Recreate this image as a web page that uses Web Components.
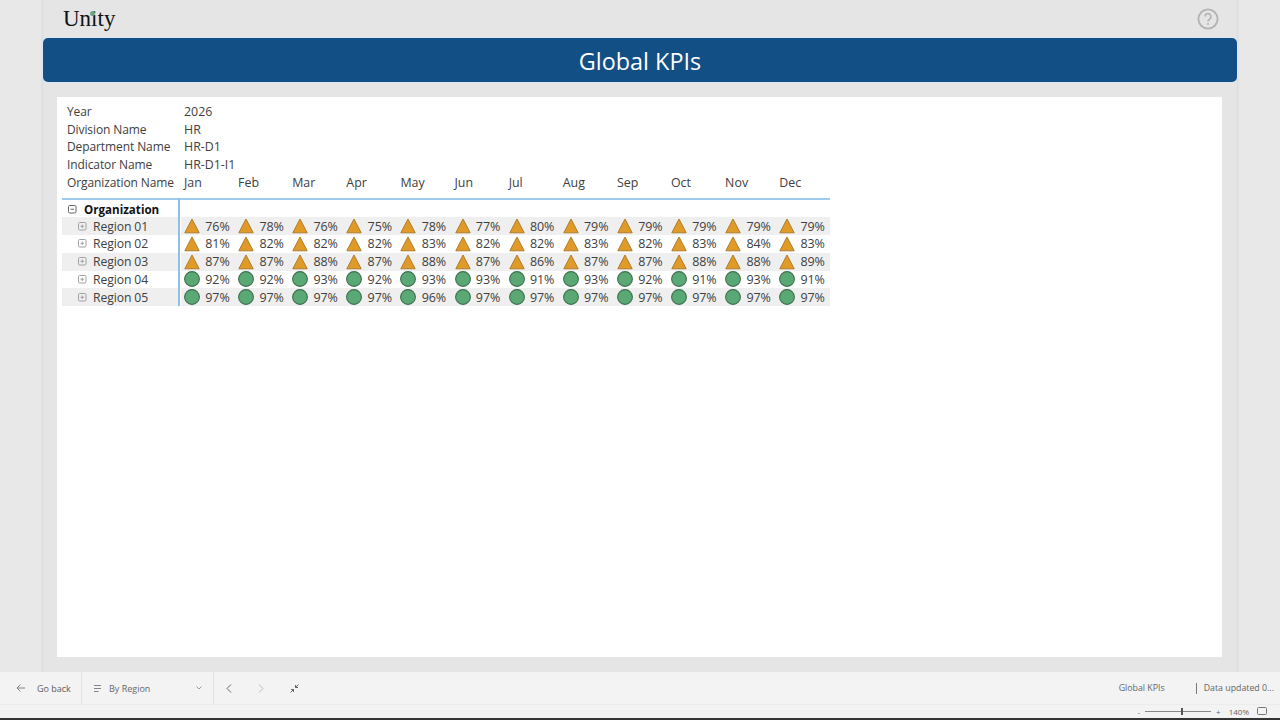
<!DOCTYPE html>
<html>
<head>
<meta charset="utf-8">
<title>Global KPIs</title>
<style>
    html, body { margin: 0; height: 100%; overflow: hidden; }
    body { background: #e8e8e8; font-family: "Open Sans", "Noto Sans", sans-serif; }
</style>
</head>
<body>
<kpi-app></kpi-app>

<script>
class KpiApp extends HTMLElement {
    constructor() {
        super();
        this.attachShadow({ mode: 'open' });
    }

    connectedCallback() {
        this.shadowRoot.innerHTML = `
            <style>
                :host {
                    display: flex;
                    flex-direction: column;
                    height: 720px;
                    width: 1280px;
                }
                .canvas {
                    flex: 1;
                    margin: 0 43px;
                    background: #e5e5e5;
                    box-shadow: -1px 0 2px rgba(0,0,0,0.07), 1px 0 2px rgba(0,0,0,0.07);
                    display: flex;
                    flex-direction: column;
                    min-height: 0;
                }
                .card {
                    flex: 1;
                    margin: 15px 15px 15px 14px;
                    background: #fff;
                    padding: 6px 5px;
                }
            </style>
            <div class="canvas">
                <kpi-top></kpi-top>
                <kpi-banner>Global KPIs</kpi-banner>
                <div class="card"><kpi-matrix></kpi-matrix></div>
            </div>
            <kpi-footer></kpi-footer>
        `;
    }
}

class KpiTop extends HTMLElement {
    constructor() {
        super();
        this.attachShadow({ mode: 'open' });
    }

    connectedCallback() {
        this.shadowRoot.innerHTML = `
            <style>
                :host {
                    display: flex;
                    align-items: center;
                    justify-content: space-between;
                    height: 38px;
                    padding: 0 18px 0 20px;
                }
                .logo {
                    position: relative;
                    font-family: "Liberation Serif", serif;
                    font-size: 23px;
                    line-height: 38px;
                    color: #111;
                }
                .dot {
                    position: absolute;
                    left: 27px;
                    top: 11px;
                    width: 5px;
                    height: 5px;
                    border-radius: 50%;
                    background: #6fa67f;
                }
                svg { display: block; }
            </style>
            <div class="logo">Unity<span class="dot"></span></div>
            <svg width="22" height="22" viewBox="0 0 22 22">
                <circle cx="11" cy="11" r="9.6" fill="none" stroke="#b4b4b4" stroke-width="1.9"/>
                <path d="M8 8.6a3 3 0 1 1 4.8 2.4c-1.2.9-1.8 1.4-1.8 2.6" fill="none" stroke="#b4b4b4" stroke-width="1.6"/>
                <circle cx="11" cy="16" r="1" fill="#b4b4b4"/>
            </svg>
        `;
    }
}

class KpiBanner extends HTMLElement {
    constructor() {
        super();
        this.attachShadow({ mode: 'open' });
    }

    connectedCallback() {
        this.shadowRoot.innerHTML = `
            <style>
                :host {
                    display: flex;
                    align-items: center;
                    justify-content: center;
                    height: 44px;
                    box-sizing: border-box;
                    padding-top: 1px;
                    background: #114f85;
                    border-radius: 5px;
                    box-shadow: 0 0 0 1px #dbe8f3;
                    color: #fff;
                    font-size: 23.4px;
                }
            </style>
            <slot></slot>
        `;
    }
}

const MONTHS = ['Jan', 'Feb', 'Mar', 'Apr', 'May', 'Jun', 'Jul', 'Aug', 'Sep', 'Oct', 'Nov', 'Dec'];
const FILTERS = [['Year', '2026'], ['Division Name', 'HR'], ['Department Name', 'HR-D1'], ['Indicator Name', 'HR-D1-I1']];
const REGIONS = [
    ['Region 01', 'warn', [76, 78, 76, 75, 78, 77, 80, 79, 79, 79, 79, 79]],
    ['Region 02', 'warn', [81, 82, 82, 82, 83, 82, 82, 83, 82, 83, 84, 83]],
    ['Region 03', 'warn', [87, 87, 88, 87, 88, 87, 86, 87, 87, 88, 88, 89]],
    ['Region 04', 'good', [92, 92, 93, 92, 93, 93, 91, 93, 92, 91, 93, 91]],
    ['Region 05', 'good', [97, 97, 97, 97, 96, 97, 97, 97, 97, 97, 97, 97]]
];

class KpiMatrix extends HTMLElement {
    constructor() {
        super();
        this.attachShadow({ mode: 'open' });
    }

    connectedCallback() {
        const filters = FILTERS.map(f => `<div class="h">${f[0]}</div><div class="h wide">${f[1]}</div>`).join('');
        const months = MONTHS.map(m => `<div class="h m">${m}</div>`).join('');
        const rows = REGIONS.map((r, i) => `
            <kpi-row name="${r[0]}" status="${r[1]}" values="${r[2].join(',')}" ${i % 2 === 0 ? 'shaded' : ''}></kpi-row>
        `).join('');

        this.shadowRoot.innerHTML = `
            <style>
                :host {
                    display: block;
                    width: 767.5px;
                    font-size: 12px;
                    color: #404040;
                }
                .head {
                    display: grid;
                    grid-template-columns: 122px repeat(12, 54.12px);
                    grid-auto-rows: 17.7px;
                    margin-bottom: 6.5px;
                }
                .h {
                    line-height: 17.7px;
                    padding-left: 5px;
                    white-space: nowrap;
                    letter-spacing: -0.1px;
                }
                .wide { grid-column: 2 / -1; padding-left: 0; font-size: 12.4px; letter-spacing: 0; }
                .m { padding-left: 0; font-size: 12.4px; letter-spacing: 0; }
                .body {
                    border-top: 2px solid #9ccbef;
                    position: relative;
                }
                .line {
                    position: absolute;
                    left: 116px;
                    top: -2px;
                    bottom: 0;
                    width: 2px;
                    background: #8cc0ea;
                }
                .org {
                    height: 17.5px;
                    display: flex;
                    align-items: center;
                    gap: 7px;
                    padding-left: 6px;
                    padding-top: 1px;
                    box-sizing: border-box;
                    font-weight: 700;
                    font-size: 11.6px;
                    color: #111;
                }
            </style>
            <div class="head">${filters}<div class="h">Organization Name</div>${months}</div>
            <div class="body">
                <div class="org"><kpi-expander minus dark></kpi-expander><span>Organization</span></div>
                ${rows}
                <div class="line"></div>
            </div>
        `;
    }
}

class KpiExpander extends HTMLElement {
    constructor() {
        super();
        this.attachShadow({ mode: 'open' });
    }

    connectedCallback() {
        const c = this.hasAttribute('dark') ? '#666' : '#a0a0a0';
        const bar = this.hasAttribute('minus') ? '' : `<path d="M4.25 2.5v3.5" stroke="${c}"/>`;
        this.shadowRoot.innerHTML = `
            <style>
                :host { display: block; width: 9px; height: 9px; flex: none; }
                svg { display: block; }
            </style>
            <svg width="9" height="9" viewBox="0 0 9 9">
                <rect x=".5" y=".5" width="7.5" height="7.5" rx="1.2" fill="none" stroke="${c}"/>
                <path d="M2.5 4.25h3.5" stroke="${c}"/>${bar}
            </svg>
        `;
    }
}

class KpiRow extends HTMLElement {
    constructor() {
        super();
        this.attachShadow({ mode: 'open' });
    }

    connectedCallback() {
        const shaded = this.hasAttribute('shaded') ? '#efefef' : 'transparent';
        const status = this.getAttribute('status');
        const cells = this.getAttribute('values').split(',')
            .map(v => `<kpi-cell status="${status}">${v}%</kpi-cell>`).join('');

        this.shadowRoot.innerHTML = `
            <style>
                :host {
                    display: grid;
                    grid-template-columns: 116px 1fr;
                    height: 17.7px;
                }
                .name {
                    display: flex;
                    align-items: center;
                    gap: 6px;
                    padding-left: 16px;
                    background: ${shaded};
                    white-space: nowrap;
                    font-size: 12.2px;
                    letter-spacing: -0.1px;
                }
                .cells {
                    display: grid;
                    grid-template-columns: repeat(12, 54.12px);
                    margin-left: 3px;
                    background: ${shaded};
                    min-width: 0;
                }
            </style>
            <div class="name"><kpi-expander></kpi-expander><span>${this.getAttribute('name')}</span></div>
            <div class="cells">${cells}</div>
        `;
    }
}

class KpiCell extends HTMLElement {
    constructor() {
        super();
        this.attachShadow({ mode: 'open' });
    }

    connectedCallback() {
        const icon = this.getAttribute('status') === 'good'
            ? '<circle cx="8" cy="8" r="7.4" fill="#5aa873" stroke="#3f6f50" stroke-width="1.1"/>'
            : '<path d="M8 1L15.2 14.8H.8z" fill="#e09a27" stroke="#b07c2c" stroke-width="1"/>';
        this.shadowRoot.innerHTML = `
            <style>
                :host {
                    display: flex;
                    align-items: center;
                    justify-content: space-between;
                    padding: 0 5.5px 0 3px;
                    font-size: 12.5px;
                    letter-spacing: -0.1px;
                }
                svg { display: block; flex: none; }
            </style>
            <svg width="16" height="16" viewBox="0 0 16 16">${icon}</svg>
            <slot></slot>
        `;
    }
}

class KpiFooter extends HTMLElement {
    constructor() {
        super();
        this.attachShadow({ mode: 'open' });
    }

    connectedCallback() {
        this.shadowRoot.innerHTML = `
            <style>
                :host {
                    display: block;
                    height: 48px;
                    background: #f3f3f3;
                    border-bottom: 2px solid #333;
                    box-sizing: border-box;
                    font-size: 9px;
                    color: #666;
                }
                svg { display: block; flex: none; }
                .nav {
                    display: flex;
                    align-items: center;
                    height: 33px;
                    border-bottom: 1px solid #ececec;
                    box-sizing: border-box;
                }
                .seg {
                    display: flex;
                    align-items: center;
                    height: 100%;
                    border-right: 1px solid #e2e2e2;
                    box-sizing: border-box;
                }
                .back { width: 82px; padding-left: 16px; gap: 11px; color: #5c5c5c; }
                .page { width: 132px; padding: 0 11px; gap: 7px; }
                .page span { flex: 1; }
                .ctl { border: 0; padding-left: 12px; gap: 26px; }
                .right {
                    margin-left: auto;
                    display: flex;
                    align-items: center;
                    padding-right: 6px;
                    font-size: 8.8px;
                }
                .sep { width: 1px; height: 11px; background: #777; margin: 0 7px 0 31px; }
                .zoom {
                    display: flex;
                    align-items: center;
                    justify-content: flex-end;
                    height: 12px;
                    padding-right: 13px;
                    font-size: 8px;
                    gap: 5px;
                }
                .slider { position: relative; width: 66px; height: 1px; background: #888; }
                .thumb {
                    position: absolute;
                    left: 36px;
                    top: -3px;
                    width: 2px;
                    height: 7px;
                    background: #555;
                }
            </style>
            <div class="nav">
                <div class="seg back">
                    <svg width="10" height="10" viewBox="0 0 10 10" fill="none" stroke="#777" stroke-width=".9"><path d="M9 5H1M4.5 1.5L1 5l3.5 3.5"/></svg>
                    <span>Go back</span>
                </div>
                <div class="seg page">
                    <svg width="9" height="9" viewBox="0 0 9 9" fill="none" stroke="#777" stroke-width=".9"><path d="M1 1.5h7M1 4.5h7M1 7.5h4.5"/></svg>
                    <span>By Region</span>
                    <svg width="6" height="4" viewBox="0 0 6 4" fill="none" stroke="#888" stroke-width=".8"><path d="M.5 .5L3 3l2.5-2.5"/></svg>
                </div>
                <div class="seg ctl">
                    <svg width="6" height="9" viewBox="0 0 6 9" fill="none" stroke="#666" stroke-width="1"><path d="M5 .5L1 4.5l4 4"/></svg>
                    <svg width="6" height="9" viewBox="0 0 6 9" fill="none" stroke="#bbb" stroke-width="1"><path d="M1 .5l4 4-4 4"/></svg>
                    <svg width="9" height="9" viewBox="0 0 9 9" fill="none" stroke="#555" stroke-width=".9"><path d="M8.5 .5L5.5 3.5M5.5 1v2.5H8M.5 8.5l3-3M3.5 8V5.5H1"/></svg>
                </div>
                <div class="right">
                    <span>Global KPIs</span>
                    <div class="sep"></div>
                    <span>Data updated 0...</span>
                </div>
            </div>
            <div class="zoom">
                <span>-</span>
                <div class="slider"><div class="thumb"></div></div>
                <span>+</span>
                <span style="margin-left:3px">140%</span>
                <svg style="margin-left:3px" width="10" height="8" viewBox="0 0 10 8" fill="none" stroke="#777"><rect x=".5" y=".5" width="9" height="7" rx="1"/></svg>
            </div>
        `;
    }
}

customElements.define('kpi-app', KpiApp);
customElements.define('kpi-top', KpiTop);
customElements.define('kpi-banner', KpiBanner);
customElements.define('kpi-matrix', KpiMatrix);
customElements.define('kpi-expander', KpiExpander);
customElements.define('kpi-row', KpiRow);
customElements.define('kpi-cell', KpiCell);
customElements.define('kpi-footer', KpiFooter);
</script>
</body>
</html>
